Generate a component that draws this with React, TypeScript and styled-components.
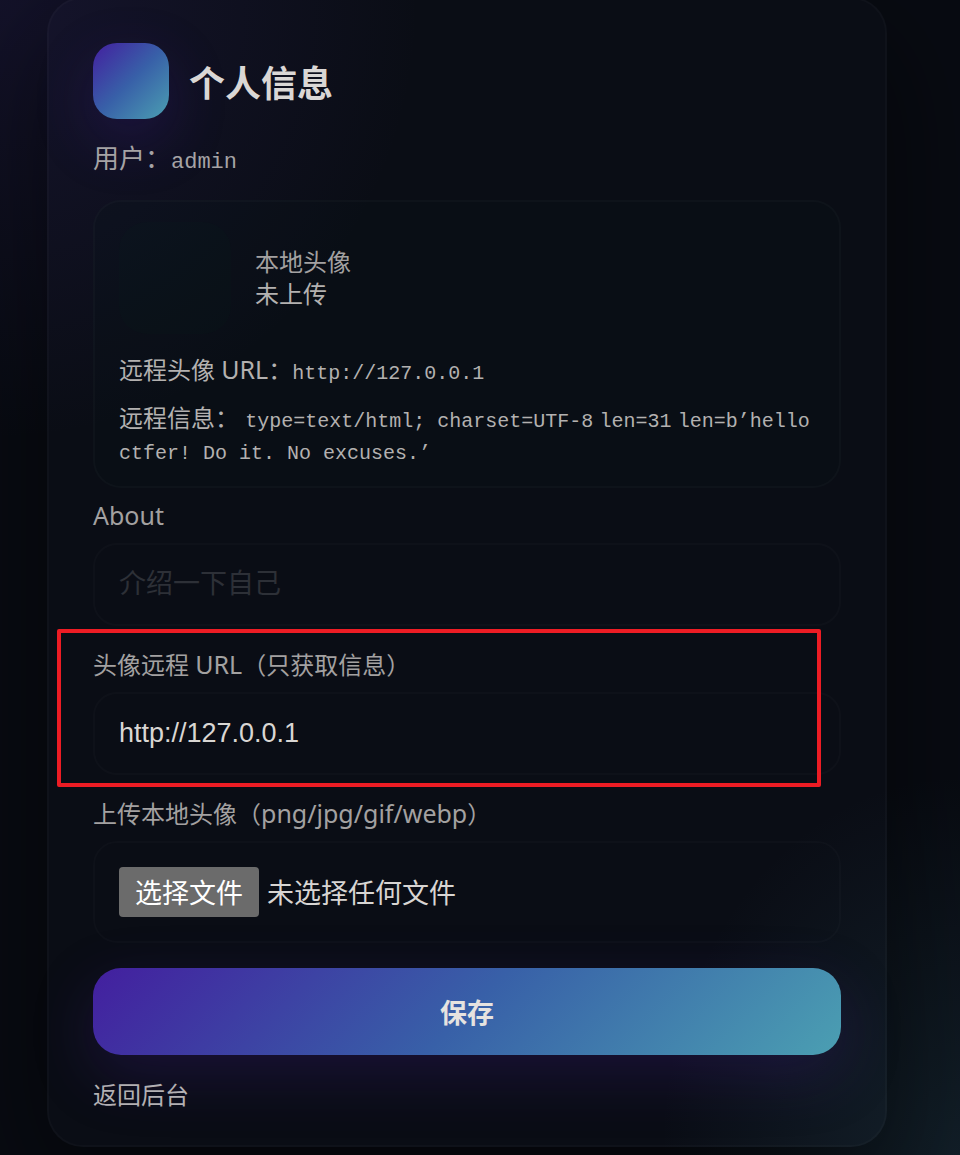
import React, { useState } from "react";
import styled, { createGlobalStyle } from "styled-components";

const sans = `"Noto Sans", "Noto Sans CJK SC", sans-serif`;
const cjk = `"Noto Sans CJK SC", sans-serif`;
const ui = `"Liberation Sans", "Noto Sans CJK SC", sans-serif`;
const mono = `"Liberation Mono", "Noto Sans CJK SC", monospace`;
const accent = "linear-gradient(135deg, #431f9f 0%, #3860a8 50%, #4b9fb2 100%)";

const GlobalStyle = createGlobalStyle`
  *, *::before, *::after { box-sizing: border-box; }
  body {
    margin: 0;
    background: #04060e;
    color: #d8d5d3;
    font: 24px/32px ${sans};
  }
`;

const Page = styled.main`
  min-height: 100vh;
  overflow: hidden;
  padding: 0 73px 8px 47px;
  background:
    radial-gradient(420px 440px at 0 0, rgba(72, 50, 150, 0.18), transparent),
    radial-gradient(300px 380px at 100% 100%, rgba(62, 120, 140, 0.18), transparent),
    #080b12;
`;

const Card = styled.section`
  margin-top: -3px;
  padding: 44px 44px 34px;
  border: 2px solid rgba(255, 255, 255, 0.025);
  border-radius: 36px;
  background: rgba(150, 170, 210, 0.02);
  box-shadow: 0 40px 120px rgba(0, 0, 0, 0.5);
`;

const Header = styled.header`
  display: flex;
  align-items: center;
  gap: 20px;
`;

const Logo = styled.div`
  width: 76px;
  height: 76px;
  border-radius: 24px;
  background: ${accent};
  box-shadow: 0 20px 60px rgba(70, 30, 170, 0.24);
`;

const Title = styled.h1`
  margin: 0;
  font: 700 36px/48px ${cjk};
  color: #dad7d5;
`;

const UserLine = styled.p`
  margin: 23px 0 26px;
  font-size: 26px;
  color: #a5a3a5;
`;

const Code = styled.code<{ $large?: boolean }>`
  font-family: ${mono};
  font-size: ${(p) => (p.$large ? 22 : 20)}px;
  line-height: 1;
`;

const Latin = styled.span`
  font-size: 25px;
  line-height: 1;
`;

const Panel = styled.section`
  display: flex;
  flex-direction: column;
  gap: 16px;
  padding: 20px 24px;
  border: 2px solid rgba(255, 255, 255, 0.025);
  border-radius: 28px;
  background: rgba(8, 22, 26, 0.16);
  color: #b3b1b0;
`;

const AvatarRow = styled.div`
  display: flex;
  align-items: center;
  gap: 24px;
  margin-bottom: 4px;
`;

const Avatar = styled.div`
  width: 112px;
  height: 112px;
  border-radius: 28px;
  background: rgba(14, 44, 34, 0.1);
`;

const Muted = styled.div`
  color: #a3a1a1;
`;

const InfoLine = styled.p`
  margin: 0;
`;

const Form = styled.form`
  display: flex;
  flex-direction: column;
  gap: 23px;
  margin-top: 12px;
`;

const Field = styled.div`
  position: relative;
  display: flex;
  flex-direction: column;
  gap: 11px;
`;

const Label = styled.label`
  color: #a3a1a1;
`;

const TextInput = styled.input`
  width: 100%;
  height: 83px;
  padding: 0 24px;
  border: 2px solid rgba(255, 255, 255, 0.02);
  border-radius: 24px;
  outline: none;
  background: rgba(255, 255, 255, 0.004);
  color: #d9d6d3;
  font: 27px/32px ${ui};

  &::placeholder {
    color: #2d3037;
    opacity: 1;
  }
`;

const FileBox = styled.div`
  position: relative;
  display: flex;
  align-items: center;
  gap: 8px;
  padding: 24px;
  border: 2px solid rgba(255, 255, 255, 0.02);
  border-radius: 24px;
  font: 27px/50px ${cjk};
`;

const FileButton = styled.span`
  padding: 0 16px;
  border-radius: 4px;
  background: #6b6b6b;
  color: #fff;
`;

const FileInput = styled.input`
  position: absolute;
  inset: 0;
  width: 100%;
  height: 100%;
  opacity: 0;
  cursor: pointer;
`;

const Highlight = styled.div`
  position: absolute;
  inset: -20px 20px -12px -36px;
  border: 4px solid #ed1c24;
  border-radius: 2px;
  pointer-events: none;
`;

const SaveButton = styled.button`
  height: 87px;
  margin-top: 2px;
  border: 0;
  border-radius: 28px;
  background: ${accent};
  box-shadow: 0 20px 60px rgba(70, 30, 150, 0.26);
  color: #e6e3e0;
  font: 700 27px/32px ${cjk};
  cursor: pointer;
`;

const BackLink = styled.a`
  display: inline-block;
  margin-top: 24px;
  color: #b3b0b3;
  text-decoration: none;
  vertical-align: top;
`;

export default function App() {
  const [url, setUrl] = useState("http://127.0.0.1");
  const [fileName, setFileName] = useState("未选择任何文件");

  return (
    <>
      <GlobalStyle />
      <Page lang="zh-CN">
        <Card>
          <Header>
            <Logo />
            <Title>个人信息</Title>
          </Header>
          <UserLine>
            用户：<Code $large>admin</Code>
          </UserLine>

          <Panel>
            <AvatarRow>
              <Avatar />
              <div>
                <Muted>本地头像</Muted>
                <div>未上传</div>
              </div>
            </AvatarRow>
            <InfoLine>
              远程头像 <Latin>URL</Latin>：<Code>http://127.0.0.1</Code>
            </InfoLine>
            <InfoLine>
              远程信息： <Code>type=text/html; charset=UTF-8</Code> <Code>len=31</Code>{" "}
              <Code>len=b’hello</Code> <Code>ctfer! Do it. No excuses.’</Code>
            </InfoLine>
          </Panel>

          <Form onSubmit={(e) => e.preventDefault()}>
            <Field>
              <Label htmlFor="about">
                <Latin>About</Latin>
              </Label>
              <TextInput id="about" placeholder="介绍一下自己" />
            </Field>
            <Field>
              <Label htmlFor="avatar-url">
                头像远程 <Latin>URL</Latin>（只获取信息）
              </Label>
              <TextInput
                id="avatar-url"
                value={url}
                onChange={(e) => setUrl(e.target.value)}
              />
              <Highlight />
            </Field>
            <Field>
              <Label htmlFor="avatar-file">
                上传本地头像（<Latin>png/jpg/gif/webp</Latin>）
              </Label>
              <FileBox>
                <FileButton>选择文件</FileButton>
                <span>{fileName}</span>
                <FileInput
                  id="avatar-file"
                  type="file"
                  accept=".png,.jpg,.gif,.webp"
                  onChange={(e) =>
                    setFileName(e.target.files?.[0]?.name ?? "未选择任何文件")
                  }
                />
              </FileBox>
            </Field>
            <SaveButton type="submit">保存</SaveButton>
          </Form>
          <BackLink href="#admin">返回后台</BackLink>
        </Card>
      </Page>
    </>
  );
}
